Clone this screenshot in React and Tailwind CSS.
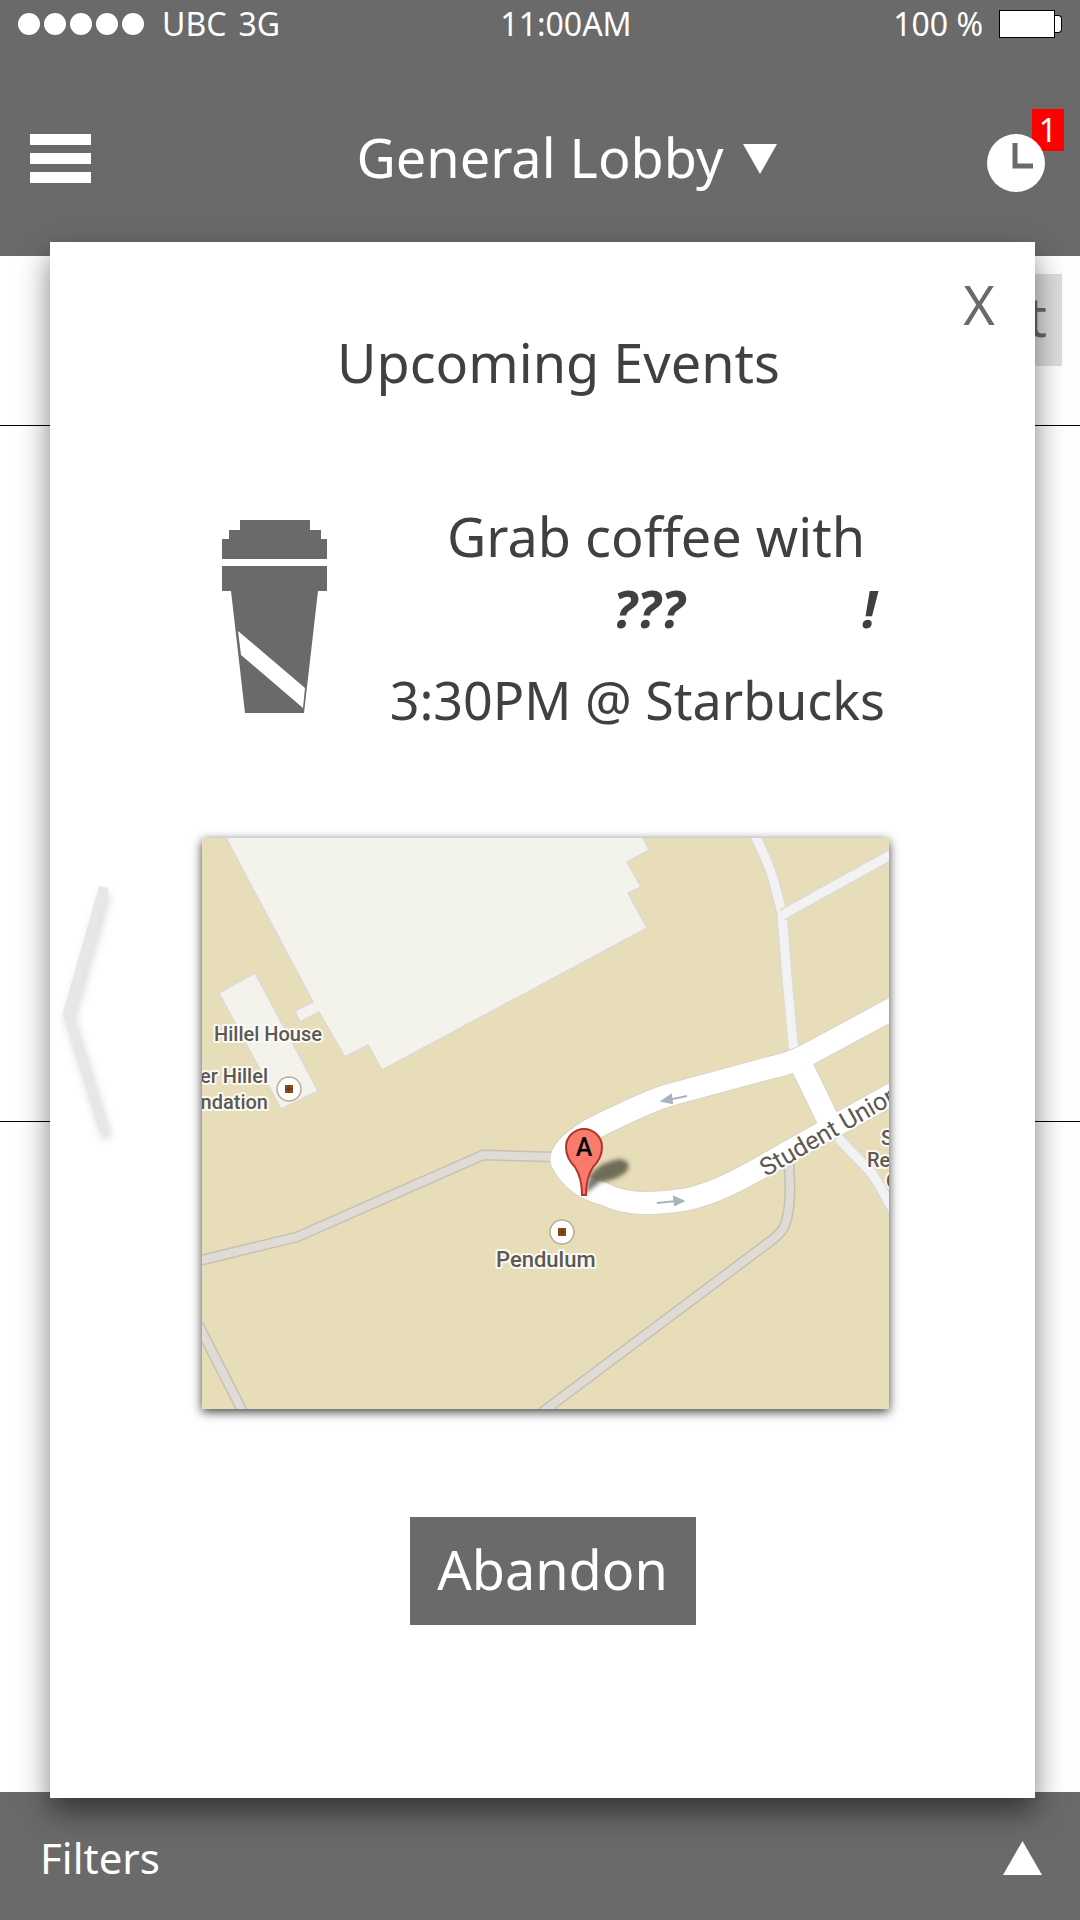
const barText = 'text-[32px] leading-[40px]';

function StatusBar() {
  return (
    <div className={`grid grid-cols-3 items-center px-[18px] pt-1 ${barText}`}>
      <div className="flex items-center gap-1">
        {[0, 1, 2, 3, 4].map((n) => (
          <span key={n} className="size-[22px] rounded-full bg-white" />
        ))}
        <span className="ml-[14px]">UBC</span>
        <span className="ml-2">3G</span>
      </div>
      <span className="pl-[52px] text-center">11:00AM</span>
      <div className="flex items-center justify-end gap-4">
        <span>100 %</span>
        <span className="flex items-center">
          <span className="h-7 w-14 border border-black bg-white" />
          <span className="h-[18px] w-[7px] rounded-r-sm border border-l-0 border-black bg-white" />
        </span>
      </div>
    </div>
  );
}

function Header() {
  return (
    <header className="h-64 bg-[#6a6a6a] text-white">
      <StatusBar />
      <div className="mt-[81px] flex items-center justify-between pl-[30px] pr-[16px]">
        <button type="button" aria-label="Menu" className="flex w-[61px] flex-col gap-2">
          <span className="h-[11px] bg-white" />
          <span className="h-[11px] bg-white" />
          <span className="h-[11px] bg-white" />
        </button>
        <button type="button" className="ml-14 flex items-center gap-5 text-[54px] leading-[60px]">
          <span className="pb-1">General Lobby</span>
          <svg width="34" height="30" viewBox="0 0 34 30" aria-hidden="true">
            <path d="M0 0H34L17 30Z" fill="white" />
          </svg>
        </button>
        <button type="button" aria-label="Upcoming events, 1 new" className="relative flex h-[67px] w-[77px] items-end">
          <span className="absolute -top-4 right-0 flex h-[42px] w-8 items-center justify-center bg-[#ff0000] text-[32px] leading-[40px]">
            1
          </span>
          <svg className="relative" width="58" height="58" viewBox="0 0 58 58" aria-hidden="true">
            <circle cx="29" cy="29" r="29" fill="white" />
            <path d="M28 9V32H46" fill="none" stroke="#6a6a6a" strokeWidth="5" />
          </svg>
        </button>
      </div>
    </header>
  );
}

function Backdrop() {
  return (
    <main className="flex flex-1 flex-col bg-white">
      <div className="flex h-[170px] items-start justify-end border-b border-black pr-[18px] pt-[18px]">
        <button type="button" className="h-[92px] bg-[#dddddd] px-[15px] pb-2 text-[54px] leading-[84px] text-[#6a6a6a]">
          Chat
        </button>
      </div>
      <div className="h-[696px] border-b border-black" />
    </main>
  );
}

function CoffeeCup() {
  return (
    <svg width="105" height="193" viewBox="0 0 105 193" role="img" aria-label="Coffee cup" className="shrink-0">
      <g fill="#6a6a6a">
        <path d="M18 0H88V10H99V19H105V39H0V19H7V10H18Z" />
        <path d="M0 46H105V71H96L82 193H23L9 71H0Z" />
      </g>
      <path d="M16 111L83 168L81 188L19 135Z" fill="white" />
    </svg>
  );
}

function PlaceMarker({ x, y }) {
  return (
    <g>
      <circle cx={x} cy={y} r="12" fill="white" stroke="#b9ad98" strokeWidth="1.5" />
      <rect x={x - 4} y={y - 4} width="8" height="8" fill="#8a4b1c" />
      <path d={`M${x - 4} ${y}h8M${x} ${y - 4}v8`} stroke="#6b3510" strokeWidth="1" />
    </g>
  );
}

function Road({ d, width, fill, edge }) {
  return (
    <g fill="none" strokeLinejoin="round">
      <path d={d} stroke={edge} strokeWidth={width + 3} />
      <path d={d} stroke={fill} strokeWidth={width} />
    </g>
  );
}

const PATHS = [
  'M-4 423L95 399L281 317L352 319',
  'M-4 486L44 580',
  'M587 325L588 350Q588 370 584 384Q582 393 570 402L335 578',
];
const LANES = [
  'M550 -8L554 0Q566 24 571 40L580 75L585 139L592 216',
  'M580 77L692 15',
  'M625 282L638 302L668 333Q674 340 692 374',
];
const LOOP =
  'M692 170L601 219Q586 226 571 229L471 256Q450 261 388 292Q356 312 360 324Q372 348 402 356Q420 365 441 365Q460 365 481 362Q510 357 551 334L620 295L692 255';
const CROSS = 'M597 222L629 288';

function CampusMap() {
  return (
    <svg
      viewBox="0 0 687 571"
      role="img"
      aria-label="Map to Starbucks"
      className="block w-full bg-[#e7ddb9] font-[Roboto,sans-serif] shadow-[0_3px_10px_rgba(0,0,0,0.75)]"
    >
      <g fill="#f3f3eb" stroke="#dcdad6" strokeWidth="1.5">
        <path d="M23 -2L111 164L93 173L98 184L117 174L143 219L166 207L180 232L445 90L426 55L439 49L425 24L447 12L440 -2Z" />
        <path d="M17 155L53 135L116 253L79 271Z" />
      </g>
      {PATHS.map((d) => (
        <Road key={d} d={d} width={8} fill="#e0dbd5" edge="#c6c1b4" />
      ))}
      {LANES.map((d) => (
        <Road key={d} d={d} width={9} fill="#f2f2f2" edge="#dcdad6" />
      ))}
      <g fill="none" strokeLinejoin="round">
        <path d={LOOP} stroke="#d8d4c8" strokeWidth="24" />
        <path d={CROSS} stroke="#d8d4c8" strokeWidth="24" />
        <path d={LOOP} stroke="white" strokeWidth="22" />
        <path d={CROSS} stroke="white" strokeWidth="22" />
      </g>
      <g stroke="#a9b3bd" strokeWidth="2" fill="#a9b3bd">
        <path d="M485 258L466 262M460 263L469 257L470 265Z" />
        <path d="M455 365L475 363M481 363L472 359L473 367Z" />
      </g>
      <PlaceMarker x={87} y={251} />
      <PlaceMarker x={360} y={394} />
      <g
        fontSize="20"
        fontWeight="500"
        fill="#5c5852"
        stroke="white"
        strokeOpacity="0.85"
        strokeWidth="4"
        strokeLinejoin="round"
        paintOrder="stroke"
      >
        <text x="12" y="203">Hillel House</text>
        <text x="66" y="245" textAnchor="end">er Hillel</text>
        <text x="66" y="271" textAnchor="end">ndation</text>
        <text x="294" y="429" fontSize="22">Pendulum</text>
        <text x="679" y="307">S</text>
        <text x="665" y="329">Re</text>
        <text x="684" y="350">C</text>
        <text x="564" y="339" fontSize="25" fontWeight="400" transform="rotate(-30 564 339)">
          Student Union
        </text>
      </g>
      <defs>
        <filter id="pinShadow" x="-30%" y="-60%" width="160%" height="220%">
          <feGaussianBlur stdDeviation="2" />
        </filter>
      </defs>
      <path
        d="M383 356L388 337Q398 324 418 321Q430 323 425 333Q416 342 398 344Z"
        fill="#3d3c2c"
        fillOpacity="0.7"
        filter="url(#pinShadow)"
      />
      <path
        d="M382 357H380Q380 340 373 329Q364 320 364 309A18 18 0 0 1 400 309Q400 320 391 329Q384 340 384 357Z"
        fill="#fa7a6c"
        stroke="#b0362c"
        strokeWidth="2"
      />
      <text x="382" y="318" textAnchor="middle" fontSize="25" fontWeight="500" fill="black">A</text>
    </svg>
  );
}

function EventDialog() {
  return (
    <section
      role="dialog"
      aria-labelledby="dialog-title"
      className="absolute bottom-[122px] left-[50px] right-[45px] top-[242px] bg-white text-[54px] leading-[72px] text-[#404040] shadow-[0_14px_28px_rgba(0,0,0,0.5)]"
    >
      <button type="button" aria-label="Close" className="absolute right-10 top-[26px] text-[#6a6a6a]">
        X
      </button>
      <button type="button" aria-label="Previous event" className="absolute left-2 top-[636px]">
        <svg width="56" height="270" viewBox="0 0 56 270" fill="none" aria-hidden="true" className="drop-shadow-[2px_6px_4px_rgba(0,0,0,0.15)]">
          <path d="M46 9L10 135L47 254" stroke="#e7e7e7" strokeWidth="10" />
        </svg>
      </button>

      <h2 id="dialog-title" className="pl-8 pt-[84px] text-center">Upcoming Events</h2>

      <div className="mt-[102px] flex items-start justify-between pl-[172px] pr-[150px]">
        <div className="pt-5">
          <CoffeeCup />
        </div>
        <div className="flex flex-col items-end">
          <p className="pr-5">Grab coffee with</p>
          <p className="flex w-[272px] justify-between pr-2 text-[52px] font-bold italic">
            <span>???</span>
            <span>!</span>
          </p>
          <p className="mt-5 text-[52px]">3:30PM @ Starbucks</p>
        </div>
      </div>

      <div className="mt-[102px] pl-[152px] pr-[146px]">
        <CampusMap />
      </div>

      <div className="mt-[108px] flex justify-center pl-5">
        <button type="button" className="h-[108px] w-[286px] bg-[#6a6a6a] pb-1 text-white">
          Abandon
        </button>
      </div>
    </section>
  );
}

export default function App() {
  return (
    <div className="relative flex min-h-screen flex-col font-['Noto_Sans',sans-serif]">
      <Header />
      <Backdrop />
      <footer className="h-32 bg-[#6a6a6a] text-white">
        <button type="button" className="flex h-full w-full items-center justify-between pl-10 pr-[38px] pt-1 text-[42px] leading-[60px]">
          Filters
          <svg width="39" height="34" viewBox="0 0 39 34" aria-hidden="true">
            <path d="M19.500 0L39 34H0Z" fill="white" />
          </svg>
        </button>
      </footer>
      <EventDialog />
    </div>
  );
}
